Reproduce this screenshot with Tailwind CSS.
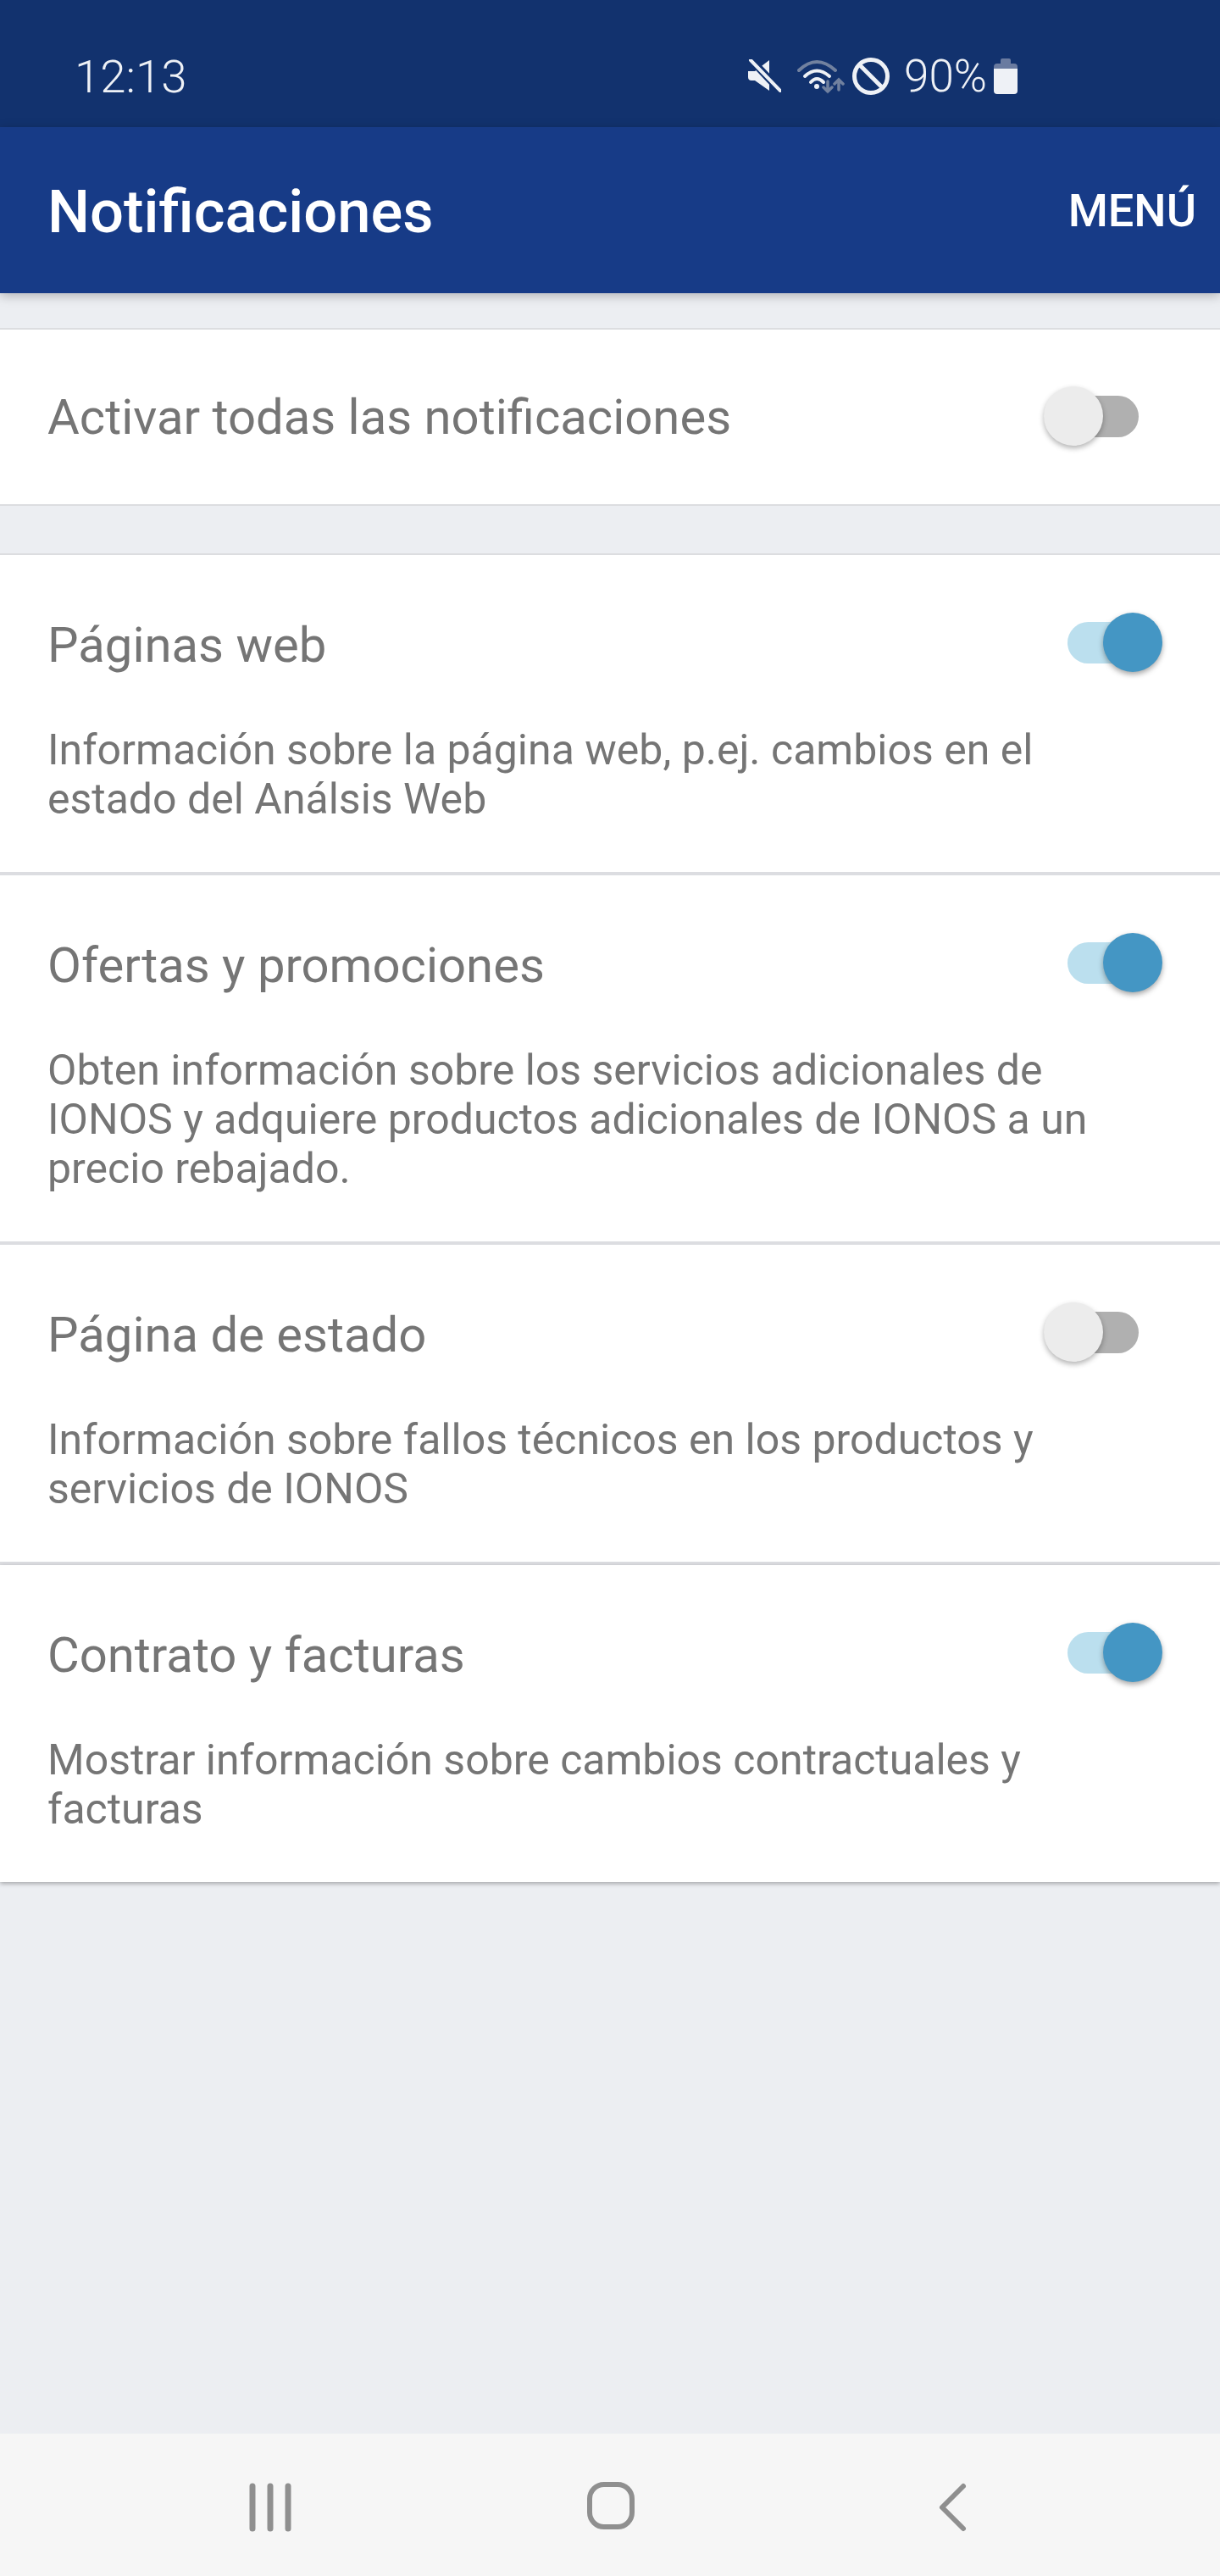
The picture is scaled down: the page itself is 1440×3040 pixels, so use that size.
<!DOCTYPE html>
<html lang="es">
<head>
  <meta charset="UTF-8">
  <meta name="viewport" content="width=device-width, initial-scale=1.0">
  <title>Notificaciones</title>
  <script src="https://cdn.jsdelivr.net/npm/@tailwindcss/browser@4"></script>
</head>
<body class="bg-[#eceef2] font-['Roboto',sans-serif]">
  <div class="flex flex-col h-[3040px] overflow-hidden">
    <!-- Status bar -->
    <div class="h-[150px] bg-[#12326e] flex items-center justify-between pt-[30px] pl-[88px] pr-[239px] text-[#eef1f6] text-[53px] font-light shrink-0">
      <span class="text-[54.5px] leading-none">12:13</span>
      <div class="flex items-center">
        <svg class="w-[40px] h-[40px]" viewBox="0 0 40 40">
          <path d="M1 14h8L26 1v36L9 25H5q-4 0-4-4z" fill="#eef1f6"/>
          <path d="M4 0l36 38" stroke="#12326e" stroke-width="9"/>
          <path d="M4 1l35 36" stroke="#eef1f6" stroke-width="4" stroke-linecap="round"/>
        </svg>
        <svg class="w-[56px] h-[42px] ml-[19px]" viewBox="0 0 56 42" fill="none" stroke-linecap="round">
          <path d="M2 14Q23 -6 45 14" stroke="#71819f" stroke-width="4"/>
          <path d="M9 21Q23 8 38 21" stroke="#eef1f6" stroke-width="4"/>
          <path d="M16 28Q23 20 31 28" stroke="#eef1f6" stroke-width="4"/>
          <circle cx="23" cy="33" r="3" fill="#eef1f6"/>
          <path d="M36 27v12M31 34l5 5 5-5M49 37V25M44 30l5-5 5 5" stroke="#71819f" stroke-width="3.5"/>
        </svg>
        <svg class="w-[44px] h-[44px] ml-[9px]" viewBox="0 0 44 44" fill="none" stroke="#eef1f6" stroke-width="5">
          <circle cx="22" cy="22" r="19.5"/>
          <path d="M8 8l28 28"/>
        </svg>
        <span class="ml-[17px] leading-none">90%</span>
        <svg class="w-[28px] h-[42px] ml-[8px]" viewBox="0 0 28 42">
          <path d="M8 6V2q0-2 2-2h8q2 0 2 2v4h4q4 0 4 4v2H0v-2q0-4 4-4z" fill="#6a7ba0"/>
          <path d="M0 12h28v26q0 4-4 4H4q-4 0-4-4z" fill="#eef1f6"/>
        </svg>
      </div>
    </div>

    <!-- App bar -->
    <div class="relative h-[196px] bg-[#173b87] flex items-center justify-between pl-[56px] pr-[28px] text-white shrink-0 shadow-[0_3px_12px_rgba(0,0,0,0.25)]">
      <h1 class="text-[70.5px] font-medium pt-[5px]">Notificaciones</h1>
      <span class="text-[54px] font-medium pt-[1px]">MENÚ</span>
    </div>

    <!-- Settings list -->
    <main class="pt-[41px]">
      <section class="bg-white border-y-2 border-[#dcdde0] h-[210px] pl-[56px] pr-[96px] pb-[2px] flex items-center justify-between">
        <h2 class="text-[58px] text-[#757575] pt-[3px]">Activar todas las notificaciones</h2>
        <div class="relative w-[84px] h-[49px] rounded-full bg-[#b0b0b0]">
          <div class="absolute left-[-28px] top-[-11px] w-[70px] h-[70px] rounded-full bg-[#ececec] shadow-[0_3px_6px_rgba(0,0,0,0.3)]"></div>
        </div>
      </section>

      <div class="h-[56px]"></div>

      <section class="bg-white border-t-2 border-[#dcdde0]">
        <div class="border-b-4 border-[#dcdde1] h-[378px] pl-[56px] pr-[96px] pt-[67px]">
          <div class="flex items-center justify-between h-[72px]">
            <h2 class="text-[58px] text-[#757575] pt-[7px]">Páginas web</h2>
            <div class="relative w-[84px] h-[49px] rounded-full bg-[#bbdfee]">
              <div class="absolute right-[-28px] top-[-11px] w-[70px] h-[70px] rounded-full bg-[#4496c4] shadow-[0_3px_6px_rgba(0,0,0,0.35)]"></div>
            </div>
          </div>
          <p class="mt-[62px] text-[50px] leading-[58px] text-[#757575]">Información sobre la página web, p.ej. cambios en el<br>estado del Análsis Web</p>
        </div>
        <div class="border-b-4 border-[#dcdde1] h-[436px] pl-[56px] pr-[96px] pt-[67px]">
          <div class="flex items-center justify-between h-[72px]">
            <h2 class="text-[58px] text-[#757575] pt-[7px]">Ofertas y promociones</h2>
            <div class="relative w-[84px] h-[49px] rounded-full bg-[#bbdfee]">
              <div class="absolute right-[-28px] top-[-11px] w-[70px] h-[70px] rounded-full bg-[#4496c4] shadow-[0_3px_6px_rgba(0,0,0,0.35)]"></div>
            </div>
          </div>
          <p class="mt-[62px] text-[50px] leading-[58px] text-[#757575]">Obten información sobre los servicios adicionales de<br>IONOS y adquiere productos adicionales de IONOS a un<br>precio rebajado.</p>
        </div>
        <div class="border-b-4 border-[#dcdde1] h-[378px] pl-[56px] pr-[96px] pt-[67px]">
          <div class="flex items-center justify-between h-[72px]">
            <h2 class="text-[58px] text-[#757575] pt-[7px]">Página de estado</h2>
            <div class="relative w-[84px] h-[49px] rounded-full bg-[#b0b0b0]">
              <div class="absolute left-[-28px] top-[-11px] w-[70px] h-[70px] rounded-full bg-[#ececec] shadow-[0_3px_6px_rgba(0,0,0,0.3)]"></div>
            </div>
          </div>
          <p class="mt-[62px] text-[50px] leading-[58px] text-[#757575]">Información sobre fallos técnicos en los productos y<br>servicios de IONOS</p>
        </div>
        <div class="h-[374px] pl-[56px] pr-[96px] pt-[67px] shadow-[0_2px_5px_rgba(0,0,0,0.3)]">
          <div class="flex items-center justify-between h-[72px]">
            <h2 class="text-[58px] text-[#757575] pt-[7px]">Contrato y facturas</h2>
            <div class="relative w-[84px] h-[49px] rounded-full bg-[#bbdfee]">
              <div class="absolute right-[-28px] top-[-11px] w-[70px] h-[70px] rounded-full bg-[#4496c4] shadow-[0_3px_6px_rgba(0,0,0,0.35)]"></div>
            </div>
          </div>
          <p class="mt-[62px] text-[50px] leading-[58px] text-[#757575]">Mostrar información sobre cambios contractuales y<br>facturas</p>
        </div>
      </section>
    </main>

    <!-- Navigation bar -->
    <nav class="mt-auto h-[168px] bg-[#f6f6f6] flex items-center justify-center shrink-0">
      <svg class="w-[1440px] h-[168px]" viewBox="0 0 1440 168" fill="none" stroke="#8f8f8f" stroke-linecap="round">
        <path d="M298 62v50M319 62v50M340 62v50" stroke-width="7"/>
        <rect x="696" y="60" width="50" height="50" rx="17" stroke-width="6"/>
        <path d="M1137 62l-25 25 25 25" stroke-width="6" stroke-linejoin="round"/>
      </svg>
    </nav>
  </div>
</body>
</html>
